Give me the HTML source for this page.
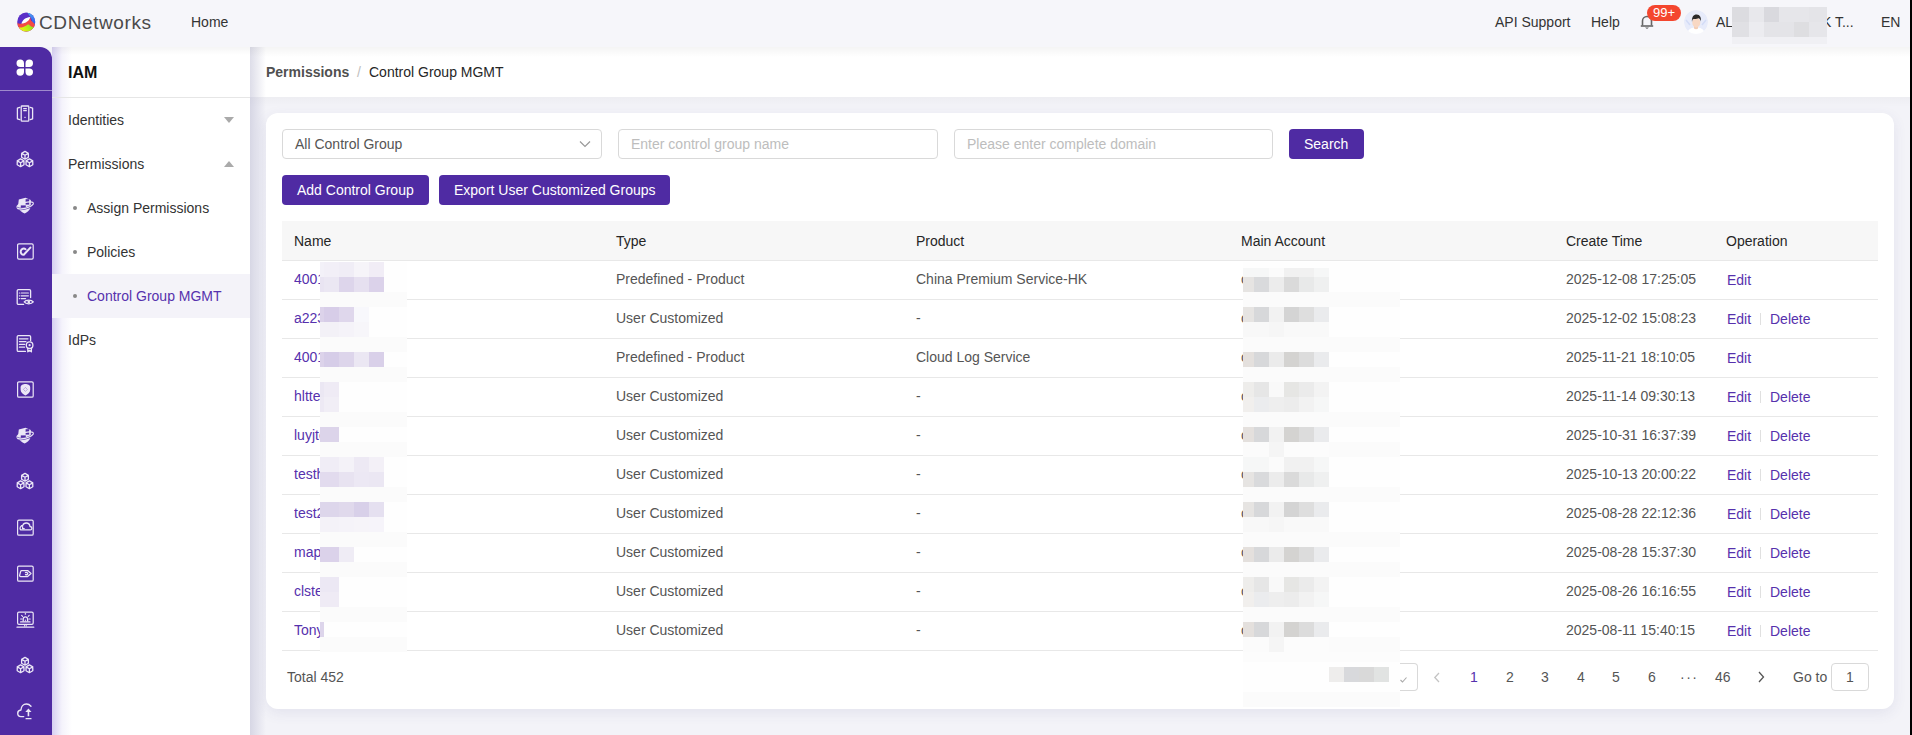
<!DOCTYPE html>
<html><head><meta charset="utf-8">
<style>
*{box-sizing:border-box;margin:0;padding:0}
html,body{width:1912px;height:735px;overflow:hidden;background:#f3f3f8;font-family:"Liberation Sans",sans-serif;color:#333;}
.t{position:absolute;white-space:nowrap;line-height:14px;font-size:14px;height:14px;}
.r{position:absolute;}
svg{position:absolute;overflow:visible}
</style></head><body>
<div class="r" style="left:0px;top:0px;width:1910px;height:47px;background:#f6f6fa;"></div>
<svg style="left:17px;top:11.5px" width="19" height="20" viewBox="0 0 19 20">
<defs>
<clipPath id="lc"><ellipse cx="9.2" cy="10" rx="9" ry="9.6"/></clipPath>
<linearGradient id="lgb" x1="0" y1="0" x2="0.3" y2="1"><stop offset="0" stop-color="#55b6ee"/><stop offset="1" stop-color="#2f5cf0"/></linearGradient>
<linearGradient id="lgg" x1="0" y1="0" x2="1" y2="-0.3"><stop offset="0" stop-color="#f2f20e"/><stop offset="1" stop-color="#5ee22a"/></linearGradient>
</defs>
<g clip-path="url(#lc)">
<rect x="0" y="0" width="19" height="20" fill="#5a2fc8"/>
<path d="M9.3 -1 L20 -1 L20 13 L15.3 12.4 C15.5 8.8 14.6 5.8 12.4 3.4 Z" fill="url(#lgb)"/>
<path d="M-1 9.6 C0.5 11.6 2.5 12 4.6 11.5 C8.5 11 12.3 8.6 13.1 5.2 L14 8.4 L18.5 12.8 L18 20 L-1 20 Z" fill="#f44a44"/>
<path d="M-1 14.8 C3 16.6 7 15.2 11.2 12.2 L14.6 14.8 L20 16 L20 21 L-1 21 Z" fill="url(#lgg)"/>
<path d="M4.4 11.6 C5.2 8 8.8 5.2 13.3 4.9 C12.6 8.6 8.6 11.2 4.4 11.6 Z" fill="#fff"/>
</g>
</svg>
<div class="t" style="left:39px;top:13px;font-size:19px;line-height:19px;height:19px;color:#4a4a4a;letter-spacing:0.6px;">CDNetworks</div>
<div class="t" style="left:191px;top:15px;">Home</div>
<div class="t" style="left:1495px;top:15px;">API Support</div>
<div class="t" style="left:1591px;top:15px;">Help</div>
<svg style="left:1640px;top:14px" width="14" height="16" viewBox="0 0 14 16">
<path d="M2.5 11.5 V7 A4.5 4.5 0 0 1 11.5 7 V11.5" fill="none" stroke="#666" stroke-width="1.6"/>
<path d="M0.8 12 H13.2" stroke="#666" stroke-width="1.6"/>
<path d="M5 13.5 H9 L7 15 Z" fill="#666"/>
</svg>
<div class="r" style="left:1647px;top:5px;width:34px;height:16px;border-radius:8px;background:#f4462e;color:#fff;font-size:13px;line-height:16px;text-align:center;">99+</div>
<svg style="left:1684px;top:10px" width="24" height="24" viewBox="0 0 24 24">
<defs><clipPath id="avc"><circle cx="12" cy="12" r="12"/></clipPath></defs>
<g clip-path="url(#avc)">
<circle cx="12" cy="12" r="12" fill="#e7ebfa"/>
<path d="M2 10 L6 15 M22 10 L18 15" stroke="#d3dcf6" stroke-width="1.5"/>
<path d="M3 24 C4 18.5 8 17.5 12 17.5 C16 17.5 20 18.5 21 24Z" fill="#fff"/>
<path d="M10 15 H14 V18.5 C13 19.5 11 19.5 10 18.5Z" fill="#f3cdb6"/>
<ellipse cx="12.3" cy="12.6" rx="4" ry="4.9" fill="#f8d8c4"/>
<path d="M8 12 C7.4 6.5 10 4.2 12.8 4.4 C15.8 4.6 17.5 7 16.8 11.5 C16.5 9.5 15.5 8.6 14.5 8.3 C12.5 9 10 9 8.8 9.2 C8.3 10 8.1 11 8 12Z" fill="#2a2a2a"/>
</g>
</svg>
<div class="t" style="left:1716px;top:15px;">AL</div>
<div class="t" style="left:1822px;top:15px;">K T...</div>
<div class="r" style="left:1732px;top:7px;width:17px;height:15px;background:#dcdce0;"></div>
<div class="r" style="left:1749px;top:7px;width:15px;height:15px;background:#e8e8ec;"></div>
<div class="r" style="left:1764px;top:7px;width:15px;height:15px;background:#d9d9de;"></div>
<div class="r" style="left:1779px;top:7px;width:15px;height:15px;background:#e6e6ea;"></div>
<div class="r" style="left:1794px;top:7px;width:15px;height:15px;background:#e6e6ea;"></div>
<div class="r" style="left:1809px;top:7px;width:18px;height:15px;background:#e4e4e8;"></div>
<div class="r" style="left:1732px;top:22px;width:17px;height:15px;background:#e0e0e4;"></div>
<div class="r" style="left:1749px;top:22px;width:15px;height:15px;background:#ececf0;"></div>
<div class="r" style="left:1764px;top:22px;width:15px;height:15px;background:#e4e4e8;"></div>
<div class="r" style="left:1779px;top:22px;width:15px;height:15px;background:#e4e4e8;"></div>
<div class="r" style="left:1794px;top:22px;width:15px;height:15px;background:#dedee1;"></div>
<div class="r" style="left:1809px;top:22px;width:18px;height:15px;background:#e6e6ea;"></div>
<div class="r" style="left:1732px;top:37px;width:95px;height:7px;background:#f0f0f4;"></div>
<div class="t" style="left:1881px;top:15px;">EN</div>
<div class="r" style="left:250px;top:47px;width:1660px;height:688px;background:#f3f3f8;"></div>
<div class="r" style="left:250px;top:97px;width:1660px;height:10px;background:linear-gradient(180deg,rgba(0,0,0,.025),rgba(0,0,0,0));"></div>
<div class="r" style="left:250px;top:47px;width:1660px;height:50px;background:#fff;"></div>
<div class="r" style="left:250px;top:47px;width:16px;height:688px;background:linear-gradient(90deg,rgba(180,180,205,.45),rgba(180,180,205,0));"></div>
<div class="r" style="left:52px;top:47px;width:1858px;height:10px;background:linear-gradient(180deg,rgba(0,0,0,.045),rgba(0,0,0,0));"></div>
<div class="t" style="left:266px;top:65px;color:#505050;font-weight:bold;">Permissions</div>
<div class="t" style="left:357px;top:65px;color:#c0c0c0;">/</div>
<div class="t" style="left:369px;top:65px;color:#262626;">Control Group MGMT</div>
<div class="r" style="left:266px;top:113px;width:1628px;height:596px;background:#fff;border-radius:12px;box-shadow:0 4px 14px rgba(70,70,130,.09);"></div>
<div class="r" style="left:282px;top:129px;width:320px;height:30px;border:1px solid #d9d9d9;border-radius:4px;background:#fff;"></div>
<div class="t" style="left:295px;top:137px;color:#555;">All Control Group</div>
<svg style="left:579px;top:140px" width="12" height="8" viewBox="0 0 12 8"><path d="M1 1.5 L6 6.5 L11 1.5" fill="none" stroke="#999" stroke-width="1.2"/></svg>
<div class="r" style="left:618px;top:129px;width:320px;height:30px;border:1px solid #d9d9d9;border-radius:4px;background:#fff;"></div>
<div class="t" style="left:631px;top:137px;color:#bdbdbd;">Enter control group name</div>
<div class="r" style="left:954px;top:129px;width:319px;height:30px;border:1px solid #d9d9d9;border-radius:4px;background:#fff;"></div>
<div class="t" style="left:967px;top:137px;color:#bdbdbd;">Please enter complete domain</div>
<div class="r" style="left:1289px;top:129px;width:75px;height:30px;background:#4f2ba3;border-radius:4px;"></div>
<div class="t" style="left:1304px;top:137px;color:#fff;">Search</div>
<div class="r" style="left:282px;top:175px;width:147px;height:30px;background:#4f2ba3;border-radius:4px;"></div>
<div class="t" style="left:297px;top:183px;color:#fff;">Add Control Group</div>
<div class="r" style="left:439px;top:175px;width:231px;height:30px;background:#4f2ba3;border-radius:4px;"></div>
<div class="t" style="left:454px;top:183px;color:#fff;">Export User Customized Groups</div>
<div class="r" style="left:282px;top:221px;width:1596px;height:39px;background:#f7f7f7;"></div>
<div class="t" style="left:294px;top:234px;color:#262626;">Name</div>
<div class="t" style="left:616px;top:234px;color:#262626;">Type</div>
<div class="t" style="left:916px;top:234px;color:#262626;">Product</div>
<div class="t" style="left:1241px;top:234px;color:#262626;">Main Account</div>
<div class="t" style="left:1566px;top:234px;color:#262626;">Create Time</div>
<div class="t" style="left:1726px;top:234px;color:#262626;">Operation</div>
<div class="r" style="left:282px;top:260px;width:1596px;height:1px;background:#e8e8e8;"></div>
<div class="r" style="left:294px;top:272px;width:26px;height:16px;overflow:hidden;"><div class="t" style="left:0;top:0;color:#5631ad">4001</div></div>
<div class="t" style="left:616px;top:272px;color:#555;">Predefined - Product</div>
<div class="t" style="left:916px;top:272px;color:#555;">China Premium Service-HK</div>
<div class="t" style="left:1566px;top:272px;color:#555;">2025-12-08 17:25:05</div>
<div class="t" style="left:1727px;top:273px;color:#5631ad;">Edit</div>
<div class="r" style="left:282px;top:299px;width:1596px;height:1px;background:#e8e8e8;"></div>
<div class="r" style="left:294px;top:311px;width:26px;height:16px;overflow:hidden;"><div class="t" style="left:0;top:0;color:#5631ad">a223</div></div>
<div class="t" style="left:616px;top:311px;color:#555;">User Customized</div>
<div class="t" style="left:916px;top:311px;color:#555;">-</div>
<div class="t" style="left:1566px;top:311px;color:#555;">2025-12-02 15:08:23</div>
<div class="t" style="left:1727px;top:312px;color:#5631ad;">Edit</div>
<div class="r" style="left:1760px;top:313px;width:1px;height:12px;background:#e0e0e0;"></div>
<div class="t" style="left:1770px;top:312px;color:#5631ad;">Delete</div>
<div class="r" style="left:282px;top:338px;width:1596px;height:1px;background:#e8e8e8;"></div>
<div class="r" style="left:294px;top:350px;width:26px;height:16px;overflow:hidden;"><div class="t" style="left:0;top:0;color:#5631ad">4001</div></div>
<div class="t" style="left:616px;top:350px;color:#555;">Predefined - Product</div>
<div class="t" style="left:916px;top:350px;color:#555;">Cloud Log Service</div>
<div class="t" style="left:1566px;top:350px;color:#555;">2025-11-21 18:10:05</div>
<div class="t" style="left:1727px;top:351px;color:#5631ad;">Edit</div>
<div class="r" style="left:282px;top:377px;width:1596px;height:1px;background:#e8e8e8;"></div>
<div class="r" style="left:294px;top:389px;width:26px;height:16px;overflow:hidden;"><div class="t" style="left:0;top:0;color:#5631ad">hltte</div></div>
<div class="t" style="left:616px;top:389px;color:#555;">User Customized</div>
<div class="t" style="left:916px;top:389px;color:#555;">-</div>
<div class="t" style="left:1566px;top:389px;color:#555;">2025-11-14 09:30:13</div>
<div class="t" style="left:1727px;top:390px;color:#5631ad;">Edit</div>
<div class="r" style="left:1760px;top:391px;width:1px;height:12px;background:#e0e0e0;"></div>
<div class="t" style="left:1770px;top:390px;color:#5631ad;">Delete</div>
<div class="r" style="left:282px;top:416px;width:1596px;height:1px;background:#e8e8e8;"></div>
<div class="r" style="left:294px;top:428px;width:26px;height:16px;overflow:hidden;"><div class="t" style="left:0;top:0;color:#5631ad">luyjtc</div></div>
<div class="t" style="left:616px;top:428px;color:#555;">User Customized</div>
<div class="t" style="left:916px;top:428px;color:#555;">-</div>
<div class="t" style="left:1566px;top:428px;color:#555;">2025-10-31 16:37:39</div>
<div class="t" style="left:1727px;top:429px;color:#5631ad;">Edit</div>
<div class="r" style="left:1760px;top:430px;width:1px;height:12px;background:#e0e0e0;"></div>
<div class="t" style="left:1770px;top:429px;color:#5631ad;">Delete</div>
<div class="r" style="left:282px;top:455px;width:1596px;height:1px;background:#e8e8e8;"></div>
<div class="r" style="left:294px;top:467px;width:26px;height:16px;overflow:hidden;"><div class="t" style="left:0;top:0;color:#5631ad">testh</div></div>
<div class="t" style="left:616px;top:467px;color:#555;">User Customized</div>
<div class="t" style="left:916px;top:467px;color:#555;">-</div>
<div class="t" style="left:1566px;top:467px;color:#555;">2025-10-13 20:00:22</div>
<div class="t" style="left:1727px;top:468px;color:#5631ad;">Edit</div>
<div class="r" style="left:1760px;top:469px;width:1px;height:12px;background:#e0e0e0;"></div>
<div class="t" style="left:1770px;top:468px;color:#5631ad;">Delete</div>
<div class="r" style="left:282px;top:494px;width:1596px;height:1px;background:#e8e8e8;"></div>
<div class="r" style="left:294px;top:506px;width:26px;height:16px;overflow:hidden;"><div class="t" style="left:0;top:0;color:#5631ad">test2</div></div>
<div class="t" style="left:616px;top:506px;color:#555;">User Customized</div>
<div class="t" style="left:916px;top:506px;color:#555;">-</div>
<div class="t" style="left:1566px;top:506px;color:#555;">2025-08-28 22:12:36</div>
<div class="t" style="left:1727px;top:507px;color:#5631ad;">Edit</div>
<div class="r" style="left:1760px;top:508px;width:1px;height:12px;background:#e0e0e0;"></div>
<div class="t" style="left:1770px;top:507px;color:#5631ad;">Delete</div>
<div class="r" style="left:282px;top:533px;width:1596px;height:1px;background:#e8e8e8;"></div>
<div class="r" style="left:294px;top:545px;width:26px;height:16px;overflow:hidden;"><div class="t" style="left:0;top:0;color:#5631ad">map</div></div>
<div class="t" style="left:616px;top:545px;color:#555;">User Customized</div>
<div class="t" style="left:916px;top:545px;color:#555;">-</div>
<div class="t" style="left:1566px;top:545px;color:#555;">2025-08-28 15:37:30</div>
<div class="t" style="left:1727px;top:546px;color:#5631ad;">Edit</div>
<div class="r" style="left:1760px;top:547px;width:1px;height:12px;background:#e0e0e0;"></div>
<div class="t" style="left:1770px;top:546px;color:#5631ad;">Delete</div>
<div class="r" style="left:282px;top:572px;width:1596px;height:1px;background:#e8e8e8;"></div>
<div class="r" style="left:294px;top:584px;width:26px;height:16px;overflow:hidden;"><div class="t" style="left:0;top:0;color:#5631ad">clste</div></div>
<div class="t" style="left:616px;top:584px;color:#555;">User Customized</div>
<div class="t" style="left:916px;top:584px;color:#555;">-</div>
<div class="t" style="left:1566px;top:584px;color:#555;">2025-08-26 16:16:55</div>
<div class="t" style="left:1727px;top:585px;color:#5631ad;">Edit</div>
<div class="r" style="left:1760px;top:586px;width:1px;height:12px;background:#e0e0e0;"></div>
<div class="t" style="left:1770px;top:585px;color:#5631ad;">Delete</div>
<div class="r" style="left:282px;top:611px;width:1596px;height:1px;background:#e8e8e8;"></div>
<div class="r" style="left:294px;top:623px;width:26px;height:16px;overflow:hidden;"><div class="t" style="left:0;top:0;color:#5631ad">Tony</div></div>
<div class="t" style="left:616px;top:623px;color:#555;">User Customized</div>
<div class="t" style="left:916px;top:623px;color:#555;">-</div>
<div class="t" style="left:1566px;top:623px;color:#555;">2025-08-11 15:40:15</div>
<div class="t" style="left:1727px;top:624px;color:#5631ad;">Edit</div>
<div class="r" style="left:1760px;top:625px;width:1px;height:12px;background:#e0e0e0;"></div>
<div class="t" style="left:1770px;top:624px;color:#5631ad;">Delete</div>
<div class="r" style="left:282px;top:650px;width:1596px;height:1px;background:#e8e8e8;"></div>
<div class="r" style="left:320px;top:262px;width:87px;height:390px;background:#fefefe;"></div>
<div class="r" style="left:1243px;top:262px;width:157px;height:445px;background:#fefefe;"></div>
<div class="r" style="left:320px;top:292px;width:87px;height:15px;background:#fbfbfb;"></div>
<div class="r" style="left:1243px;top:292px;width:157px;height:15px;background:#fbfbfb;"></div>
<div class="r" style="left:320px;top:337px;width:87px;height:15px;background:#fbfbfb;"></div>
<div class="r" style="left:1243px;top:337px;width:157px;height:15px;background:#fbfbfb;"></div>
<div class="r" style="left:320px;top:367px;width:87px;height:15px;background:#fbfbfb;"></div>
<div class="r" style="left:1243px;top:367px;width:157px;height:15px;background:#fbfbfb;"></div>
<div class="r" style="left:320px;top:412px;width:87px;height:15px;background:#fbfbfb;"></div>
<div class="r" style="left:1243px;top:412px;width:157px;height:15px;background:#fbfbfb;"></div>
<div class="r" style="left:320px;top:442px;width:87px;height:15px;background:#fbfbfb;"></div>
<div class="r" style="left:1243px;top:442px;width:157px;height:15px;background:#fbfbfb;"></div>
<div class="r" style="left:320px;top:487px;width:87px;height:15px;background:#fbfbfb;"></div>
<div class="r" style="left:1243px;top:487px;width:157px;height:15px;background:#fbfbfb;"></div>
<div class="r" style="left:320px;top:532px;width:87px;height:15px;background:#fbfbfb;"></div>
<div class="r" style="left:1243px;top:532px;width:157px;height:15px;background:#fbfbfb;"></div>
<div class="r" style="left:320px;top:562px;width:87px;height:15px;background:#fbfbfb;"></div>
<div class="r" style="left:1243px;top:562px;width:157px;height:15px;background:#fbfbfb;"></div>
<div class="r" style="left:320px;top:607px;width:87px;height:15px;background:#fbfbfb;"></div>
<div class="r" style="left:1243px;top:607px;width:157px;height:15px;background:#fbfbfb;"></div>
<div class="r" style="left:320px;top:637px;width:87px;height:15px;background:#fbfbfb;"></div>
<div class="r" style="left:1243px;top:637px;width:157px;height:15px;background:#fbfbfb;"></div>
<div class="r" style="left:1243px;top:652px;width:157px;height:10px;background:#fcfcfc;"></div>
<div class="r" style="left:1243px;top:692px;width:157px;height:15px;background:#fbfbfb;"></div>
<div class="r" style="left:320px;top:262px;width:4px;height:15px;background:#f3f1f8;"></div>
<div class="r" style="left:324px;top:262px;width:15px;height:15px;background:#f2eff7;"></div>
<div class="r" style="left:339px;top:262px;width:15px;height:15px;background:#f0edf6;"></div>
<div class="r" style="left:354px;top:262px;width:15px;height:15px;background:#f6f4f9;"></div>
<div class="r" style="left:369px;top:262px;width:15px;height:15px;background:#f1edf6;"></div>
<div class="r" style="left:320px;top:277px;width:4px;height:15px;background:#e9e4f2;"></div>
<div class="r" style="left:324px;top:277px;width:15px;height:15px;background:#ebe7f3;"></div>
<div class="r" style="left:339px;top:277px;width:15px;height:15px;background:#ddd5eb;"></div>
<div class="r" style="left:354px;top:277px;width:15px;height:15px;background:#e6e0f0;"></div>
<div class="r" style="left:369px;top:277px;width:15px;height:15px;background:#dbd2ea;"></div>
<div class="r" style="left:320px;top:307px;width:4px;height:15px;background:#dcd3ea;"></div>
<div class="r" style="left:324px;top:307px;width:15px;height:15px;background:#d7cde8;"></div>
<div class="r" style="left:339px;top:307px;width:15px;height:15px;background:#dfd7ec;"></div>
<div class="r" style="left:354px;top:307px;width:15px;height:15px;background:#f8f8fc;"></div>
<div class="r" style="left:320px;top:322px;width:4px;height:15px;background:#f3f1f7;"></div>
<div class="r" style="left:324px;top:322px;width:15px;height:15px;background:#f3f1f7;"></div>
<div class="r" style="left:339px;top:322px;width:15px;height:15px;background:#f5f3f9;"></div>
<div class="r" style="left:354px;top:322px;width:15px;height:15px;background:#f7f6fa;"></div>
<div class="r" style="left:320px;top:352px;width:4px;height:15px;background:#dcd3ea;"></div>
<div class="r" style="left:324px;top:352px;width:15px;height:15px;background:#d6cde8;"></div>
<div class="r" style="left:339px;top:352px;width:15px;height:15px;background:#ddd5eb;"></div>
<div class="r" style="left:354px;top:352px;width:15px;height:15px;background:#ebe7f3;"></div>
<div class="r" style="left:369px;top:352px;width:15px;height:15px;background:#d9d0e9;"></div>
<div class="r" style="left:320px;top:382px;width:4px;height:15px;background:#ebe7f3;"></div>
<div class="r" style="left:324px;top:382px;width:15px;height:15px;background:#efebf5;"></div>
<div class="r" style="left:320px;top:397px;width:4px;height:15px;background:#ede9f4;"></div>
<div class="r" style="left:324px;top:397px;width:15px;height:15px;background:#f1eef6;"></div>
<div class="r" style="left:320px;top:427px;width:4px;height:15px;background:#dcd4ea;"></div>
<div class="r" style="left:324px;top:427px;width:15px;height:15px;background:#dcd4ea;"></div>
<div class="r" style="left:320px;top:457px;width:4px;height:15px;background:#f0edf6;"></div>
<div class="r" style="left:324px;top:457px;width:15px;height:15px;background:#f0edf6;"></div>
<div class="r" style="left:339px;top:457px;width:15px;height:15px;background:#f4f2f8;"></div>
<div class="r" style="left:354px;top:457px;width:15px;height:15px;background:#ede9f4;"></div>
<div class="r" style="left:369px;top:457px;width:15px;height:15px;background:#f3f0f7;"></div>
<div class="r" style="left:320px;top:472px;width:4px;height:15px;background:#e2dbee;"></div>
<div class="r" style="left:324px;top:472px;width:15px;height:15px;background:#e2dbee;"></div>
<div class="r" style="left:339px;top:472px;width:15px;height:15px;background:#e8e3f1;"></div>
<div class="r" style="left:354px;top:472px;width:15px;height:15px;background:#ece8f4;"></div>
<div class="r" style="left:369px;top:472px;width:15px;height:15px;background:#ebe7f3;"></div>
<div class="r" style="left:320px;top:502px;width:4px;height:15px;background:#ddd6eb;"></div>
<div class="r" style="left:324px;top:502px;width:15px;height:15px;background:#ddd6eb;"></div>
<div class="r" style="left:339px;top:502px;width:15px;height:15px;background:#e0d9ec;"></div>
<div class="r" style="left:354px;top:502px;width:15px;height:15px;background:#d8d0e9;"></div>
<div class="r" style="left:369px;top:502px;width:15px;height:15px;background:#e5e0f0;"></div>
<div class="r" style="left:320px;top:517px;width:4px;height:15px;background:#f4f2f8;"></div>
<div class="r" style="left:324px;top:517px;width:15px;height:15px;background:#f4f2f8;"></div>
<div class="r" style="left:339px;top:517px;width:15px;height:15px;background:#f5f3f9;"></div>
<div class="r" style="left:354px;top:517px;width:15px;height:15px;background:#f6f4f9;"></div>
<div class="r" style="left:369px;top:517px;width:15px;height:15px;background:#f6f4fa;"></div>
<div class="r" style="left:320px;top:547px;width:4px;height:15px;background:#dbd2ea;"></div>
<div class="r" style="left:324px;top:547px;width:15px;height:15px;background:#dbd2ea;"></div>
<div class="r" style="left:339px;top:547px;width:15px;height:15px;background:#efecf5;"></div>
<div class="r" style="left:320px;top:577px;width:4px;height:15px;background:#ece8f4;"></div>
<div class="r" style="left:324px;top:577px;width:15px;height:15px;background:#ece8f4;"></div>
<div class="r" style="left:320px;top:592px;width:4px;height:15px;background:#efebf5;"></div>
<div class="r" style="left:324px;top:592px;width:15px;height:15px;background:#efebf5;"></div>
<div class="r" style="left:320px;top:622px;width:4px;height:15px;background:#ddd5eb;"></div>
<div class="r" style="left:1243px;top:268px;width:11px;height:9px;background:#f6f7f7;"></div>
<div class="r" style="left:1254px;top:268px;width:15px;height:9px;background:#f6f7f7;"></div>
<div class="r" style="left:1269px;top:268px;width:15px;height:9px;background:#fbfbfb;"></div>
<div class="r" style="left:1284px;top:268px;width:15px;height:9px;background:#f1f1f1;"></div>
<div class="r" style="left:1299px;top:268px;width:15px;height:9px;background:#f1f1f1;"></div>
<div class="r" style="left:1314px;top:268px;width:15px;height:9px;background:#f6f7f7;"></div>
<div class="r" style="left:1243px;top:277px;width:11px;height:15px;background:#e6e4e2;"></div>
<div class="r" style="left:1254px;top:277px;width:15px;height:15px;background:#d9dadc;"></div>
<div class="r" style="left:1269px;top:277px;width:15px;height:15px;background:#ececec;"></div>
<div class="r" style="left:1284px;top:277px;width:15px;height:15px;background:#dadada;"></div>
<div class="r" style="left:1299px;top:277px;width:15px;height:15px;background:#e8e9e9;"></div>
<div class="r" style="left:1314px;top:277px;width:15px;height:15px;background:#eff0f0;"></div>
<div class="r" style="left:1243px;top:307px;width:11px;height:15px;background:#e6e4e2;"></div>
<div class="r" style="left:1254px;top:307px;width:15px;height:15px;background:#d7d8da;"></div>
<div class="r" style="left:1269px;top:307px;width:15px;height:15px;background:#f2f2f2;"></div>
<div class="r" style="left:1284px;top:307px;width:15px;height:15px;background:#d4d4d4;"></div>
<div class="r" style="left:1299px;top:307px;width:15px;height:15px;background:#dedede;"></div>
<div class="r" style="left:1314px;top:307px;width:15px;height:15px;background:#eaebed;"></div>
<div class="r" style="left:1243px;top:322px;width:11px;height:15px;background:#f8f8f8;"></div>
<div class="r" style="left:1254px;top:322px;width:15px;height:15px;background:#f8f8f8;"></div>
<div class="r" style="left:1269px;top:322px;width:15px;height:15px;background:#f6f6f6;"></div>
<div class="r" style="left:1284px;top:322px;width:15px;height:15px;background:#f9f9f9;"></div>
<div class="r" style="left:1299px;top:322px;width:15px;height:15px;background:#f9f9f9;"></div>
<div class="r" style="left:1314px;top:322px;width:15px;height:15px;background:#f9f9f9;"></div>
<div class="r" style="left:1243px;top:352px;width:11px;height:15px;background:#e4e0dd;"></div>
<div class="r" style="left:1254px;top:352px;width:15px;height:15px;background:#d7d8da;"></div>
<div class="r" style="left:1269px;top:352px;width:15px;height:15px;background:#ebebeb;"></div>
<div class="r" style="left:1284px;top:352px;width:15px;height:15px;background:#d4d3d1;"></div>
<div class="r" style="left:1299px;top:352px;width:15px;height:15px;background:#dcdcdc;"></div>
<div class="r" style="left:1314px;top:352px;width:15px;height:15px;background:#eaebed;"></div>
<div class="r" style="left:1243px;top:382px;width:11px;height:15px;background:#eeedeb;"></div>
<div class="r" style="left:1254px;top:382px;width:15px;height:15px;background:#e6e6e6;"></div>
<div class="r" style="left:1269px;top:382px;width:15px;height:15px;background:#f9f9f9;"></div>
<div class="r" style="left:1284px;top:382px;width:15px;height:15px;background:#e6e6e4;"></div>
<div class="r" style="left:1299px;top:382px;width:15px;height:15px;background:#ebebeb;"></div>
<div class="r" style="left:1314px;top:382px;width:15px;height:15px;background:#f3f3f3;"></div>
<div class="r" style="left:1243px;top:397px;width:11px;height:15px;background:#f1efed;"></div>
<div class="r" style="left:1254px;top:397px;width:15px;height:15px;background:#ebecee;"></div>
<div class="r" style="left:1269px;top:397px;width:15px;height:15px;background:#eeeeee;"></div>
<div class="r" style="left:1284px;top:397px;width:15px;height:15px;background:#ececec;"></div>
<div class="r" style="left:1299px;top:397px;width:15px;height:15px;background:#f2f2f2;"></div>
<div class="r" style="left:1314px;top:397px;width:15px;height:15px;background:#f6f7f7;"></div>
<div class="r" style="left:1243px;top:427px;width:11px;height:15px;background:#e4e0dd;"></div>
<div class="r" style="left:1254px;top:427px;width:15px;height:15px;background:#d7d8da;"></div>
<div class="r" style="left:1269px;top:427px;width:15px;height:15px;background:#f2f2f2;"></div>
<div class="r" style="left:1284px;top:427px;width:15px;height:15px;background:#d4d3d1;"></div>
<div class="r" style="left:1299px;top:427px;width:15px;height:15px;background:#dcdcdc;"></div>
<div class="r" style="left:1314px;top:427px;width:15px;height:15px;background:#eaebed;"></div>
<div class="r" style="left:1243px;top:442px;width:11px;height:15px;background:#fbfbfb;"></div>
<div class="r" style="left:1254px;top:442px;width:15px;height:15px;background:#fbfbfb;"></div>
<div class="r" style="left:1269px;top:442px;width:15px;height:15px;background:#f5f5f5;"></div>
<div class="r" style="left:1284px;top:442px;width:15px;height:15px;background:#fcfcfc;"></div>
<div class="r" style="left:1299px;top:442px;width:15px;height:15px;background:#fcfcfc;"></div>
<div class="r" style="left:1314px;top:442px;width:15px;height:15px;background:#fcfcfc;"></div>
<div class="r" style="left:1243px;top:457px;width:11px;height:15px;background:#f6f7f7;"></div>
<div class="r" style="left:1254px;top:457px;width:15px;height:15px;background:#f6f7f7;"></div>
<div class="r" style="left:1269px;top:457px;width:15px;height:15px;background:#fbfbfb;"></div>
<div class="r" style="left:1284px;top:457px;width:15px;height:15px;background:#f1f1f1;"></div>
<div class="r" style="left:1299px;top:457px;width:15px;height:15px;background:#f1f1f1;"></div>
<div class="r" style="left:1314px;top:457px;width:15px;height:15px;background:#f6f7f7;"></div>
<div class="r" style="left:1243px;top:472px;width:11px;height:15px;background:#e6e4e2;"></div>
<div class="r" style="left:1254px;top:472px;width:15px;height:15px;background:#d9dadc;"></div>
<div class="r" style="left:1269px;top:472px;width:15px;height:15px;background:#ececec;"></div>
<div class="r" style="left:1284px;top:472px;width:15px;height:15px;background:#dadada;"></div>
<div class="r" style="left:1299px;top:472px;width:15px;height:15px;background:#e8e9e9;"></div>
<div class="r" style="left:1314px;top:472px;width:15px;height:15px;background:#eff0f0;"></div>
<div class="r" style="left:1243px;top:502px;width:11px;height:15px;background:#e6e4e2;"></div>
<div class="r" style="left:1254px;top:502px;width:15px;height:15px;background:#d7d8da;"></div>
<div class="r" style="left:1269px;top:502px;width:15px;height:15px;background:#f2f2f2;"></div>
<div class="r" style="left:1284px;top:502px;width:15px;height:15px;background:#d4d4d4;"></div>
<div class="r" style="left:1299px;top:502px;width:15px;height:15px;background:#dedede;"></div>
<div class="r" style="left:1314px;top:502px;width:15px;height:15px;background:#eaebed;"></div>
<div class="r" style="left:1243px;top:517px;width:11px;height:15px;background:#f8f8f8;"></div>
<div class="r" style="left:1254px;top:517px;width:15px;height:15px;background:#f8f8f8;"></div>
<div class="r" style="left:1269px;top:517px;width:15px;height:15px;background:#f6f6f6;"></div>
<div class="r" style="left:1284px;top:517px;width:15px;height:15px;background:#f9f9f9;"></div>
<div class="r" style="left:1299px;top:517px;width:15px;height:15px;background:#f9f9f9;"></div>
<div class="r" style="left:1314px;top:517px;width:15px;height:15px;background:#f9f9f9;"></div>
<div class="r" style="left:1243px;top:547px;width:11px;height:15px;background:#e4e0dd;"></div>
<div class="r" style="left:1254px;top:547px;width:15px;height:15px;background:#d7d8da;"></div>
<div class="r" style="left:1269px;top:547px;width:15px;height:15px;background:#ebebeb;"></div>
<div class="r" style="left:1284px;top:547px;width:15px;height:15px;background:#d4d3d1;"></div>
<div class="r" style="left:1299px;top:547px;width:15px;height:15px;background:#dcdcdc;"></div>
<div class="r" style="left:1314px;top:547px;width:15px;height:15px;background:#eaebed;"></div>
<div class="r" style="left:1243px;top:577px;width:11px;height:15px;background:#eeedeb;"></div>
<div class="r" style="left:1254px;top:577px;width:15px;height:15px;background:#e6e6e6;"></div>
<div class="r" style="left:1269px;top:577px;width:15px;height:15px;background:#f9f9f9;"></div>
<div class="r" style="left:1284px;top:577px;width:15px;height:15px;background:#e6e6e4;"></div>
<div class="r" style="left:1299px;top:577px;width:15px;height:15px;background:#ebebeb;"></div>
<div class="r" style="left:1314px;top:577px;width:15px;height:15px;background:#f3f3f3;"></div>
<div class="r" style="left:1243px;top:592px;width:11px;height:15px;background:#f1efed;"></div>
<div class="r" style="left:1254px;top:592px;width:15px;height:15px;background:#ebecee;"></div>
<div class="r" style="left:1269px;top:592px;width:15px;height:15px;background:#eeeeee;"></div>
<div class="r" style="left:1284px;top:592px;width:15px;height:15px;background:#ececec;"></div>
<div class="r" style="left:1299px;top:592px;width:15px;height:15px;background:#f2f2f2;"></div>
<div class="r" style="left:1314px;top:592px;width:15px;height:15px;background:#f6f7f7;"></div>
<div class="r" style="left:1243px;top:622px;width:11px;height:15px;background:#e4e0dd;"></div>
<div class="r" style="left:1254px;top:622px;width:15px;height:15px;background:#d7d8da;"></div>
<div class="r" style="left:1269px;top:622px;width:15px;height:15px;background:#f2f2f2;"></div>
<div class="r" style="left:1284px;top:622px;width:15px;height:15px;background:#d4d3d1;"></div>
<div class="r" style="left:1299px;top:622px;width:15px;height:15px;background:#dcdcdc;"></div>
<div class="r" style="left:1314px;top:622px;width:15px;height:15px;background:#eaebed;"></div>
<div class="r" style="left:1243px;top:637px;width:11px;height:15px;background:#fbfbfb;"></div>
<div class="r" style="left:1254px;top:637px;width:15px;height:15px;background:#fbfbfb;"></div>
<div class="r" style="left:1269px;top:637px;width:15px;height:15px;background:#f5f5f5;"></div>
<div class="r" style="left:1284px;top:637px;width:15px;height:15px;background:#fcfcfc;"></div>
<div class="r" style="left:1299px;top:637px;width:15px;height:15px;background:#fcfcfc;"></div>
<div class="r" style="left:1314px;top:637px;width:15px;height:15px;background:#fcfcfc;"></div>
<div class="r" style="left:1241px;top:272px;width:2px;height:16px;overflow:hidden;"><div class="t" style="left:0;top:0;color:#555">c</div></div>
<div class="r" style="left:1241px;top:311px;width:2px;height:16px;overflow:hidden;"><div class="t" style="left:0;top:0;color:#555">c</div></div>
<div class="r" style="left:1241px;top:350px;width:2px;height:16px;overflow:hidden;"><div class="t" style="left:0;top:0;color:#555">c</div></div>
<div class="r" style="left:1241px;top:389px;width:2px;height:16px;overflow:hidden;"><div class="t" style="left:0;top:0;color:#555">c</div></div>
<div class="r" style="left:1241px;top:428px;width:2px;height:16px;overflow:hidden;"><div class="t" style="left:0;top:0;color:#555">c</div></div>
<div class="r" style="left:1241px;top:467px;width:2px;height:16px;overflow:hidden;"><div class="t" style="left:0;top:0;color:#555">c</div></div>
<div class="r" style="left:1241px;top:506px;width:2px;height:16px;overflow:hidden;"><div class="t" style="left:0;top:0;color:#555">c</div></div>
<div class="r" style="left:1241px;top:545px;width:2px;height:16px;overflow:hidden;"><div class="t" style="left:0;top:0;color:#555">c</div></div>
<div class="r" style="left:1241px;top:584px;width:2px;height:16px;overflow:hidden;"><div class="t" style="left:0;top:0;color:#555">c</div></div>
<div class="r" style="left:1241px;top:623px;width:2px;height:16px;overflow:hidden;"><div class="t" style="left:0;top:0;color:#555">c</div></div>
<div class="t" style="left:287px;top:670px;color:#555;">Total 452</div>
<div class="r" style="left:1329px;top:667px;width:15px;height:15px;background:#eeedec;"></div>
<div class="r" style="left:1344px;top:667px;width:15px;height:15px;background:#d8d9dc;"></div>
<div class="r" style="left:1359px;top:667px;width:15px;height:15px;background:#d9d9d9;"></div>
<div class="r" style="left:1374px;top:667px;width:15px;height:15px;background:#e1e3e2;"></div>
<div class="r" style="left:1400px;top:663px;width:18px;height:28px;border:1px solid #d9d9d9;border-left:none;border-radius:0 4px 4px 0;"></div>
<svg style="left:1433px;top:672px" width="8" height="11" viewBox="0 0 8 11"><path d="M6 1 L1.8 5.5 L6 10" fill="none" stroke="#c4c4c4" stroke-width="1.3"/></svg><svg style="left:1400px;top:676px" width="7" height="7" viewBox="0 0 7 7"><path d="M0.5 4 L2.5 6 L6.5 1.5" fill="none" stroke="#aaa" stroke-width="1.1"/></svg>
<div class="t" style="left:1470px;top:670px;color:#5631ad;">1</div>
<div class="t" style="left:1506px;top:670px;color:#555;">2</div>
<div class="t" style="left:1541px;top:670px;color:#555;">3</div>
<div class="t" style="left:1577px;top:670px;color:#555;">4</div>
<div class="t" style="left:1612px;top:670px;color:#555;">5</div>
<div class="t" style="left:1648px;top:670px;color:#555;">6</div>
<div class="t" style="left:1680px;top:670px;color:#555;"><span style="letter-spacing:1.5px">···</span></div>
<div class="t" style="left:1715px;top:670px;color:#555;">46</div>
<svg style="left:1757px;top:671px" width="8" height="12" viewBox="0 0 8 12"><path d="M2 1 L6.5 6 L2 11" fill="none" stroke="#555" stroke-width="1.3"/></svg>
<div class="t" style="left:1793px;top:670px;color:#555;">Go to</div>
<div class="r" style="left:1831px;top:663px;width:38px;height:28px;border:1px solid #d9d9d9;border-radius:4px;background:#fff;"></div>
<div class="t" style="left:1846px;top:670px;color:#555;">1</div>
<div class="r" style="left:0px;top:47px;width:52px;height:688px;background:#4f2ba3;border-top-right-radius:12px;"></div>
<div class="r" style="left:0px;top:90px;width:52px;height:1px;background:rgba(255,255,255,.45);"></div>
<svg style="left:15.8px;top:59.3px" width="18" height="18" viewBox="0 0 18 18"><g fill="#fff"><path d="M8 8 H4.2 A3.7 3.7 0 0 1 0.5 4.3 A3.7 3.7 0 0 1 4.2 0.6 A3.8 3.8 0 0 1 8 4.3 Z"/><path d="M9.5 8 H13.3 A3.7 3.7 0 0 0 17 4.3 A3.7 3.7 0 0 0 13.3 0.6 A3.8 3.8 0 0 0 9.5 4.3 Z"/><path d="M8 9.4 H4.2 A3.7 3.7 0 0 0 0.5 13.1 A3.7 3.7 0 0 0 4.2 16.8 A3.8 3.8 0 0 0 8 13.1 Z"/><path d="M9.5 9.4 H13.3 A3.7 3.7 0 0 1 17 13.1 A3.7 3.7 0 0 1 13.3 16.8 A3.8 3.8 0 0 1 9.5 13.1 Z"/></g></svg>
<svg style="left:15.8px;top:104.5px" width="18" height="18" viewBox="0 0 18 18"><rect x="5.2" y="1" width="7.6" height="15.2" rx="0.8" fill="none" stroke="#ebe7f6" stroke-width="1.3" stroke-linejoin="round" stroke-linecap="round"/><path d="M7.2 3.6 H10.8 M7.2 5.6 H10.8" stroke="#ebe7f6" stroke-width="1.4"/><rect x="8.4" y="11.8" width="1.2" height="1.2" fill="#ebe7f6"/><path d="M3.8 2.4 L1.4 3.2 V13.8 L3.8 14.6 M14.2 2.4 L16.6 3.2 V13.8 L14.2 14.6" fill="none" stroke="#ebe7f6" stroke-width="1.3" stroke-linejoin="round" stroke-linecap="round"/></svg>
<svg style="left:15.8px;top:150.5px" width="18" height="18" viewBox="0 0 18 18"><path d="M9.00 0.40 L5.62 2.35 L5.62 6.25 L9.00 8.20 L12.38 6.25 L12.38 2.35Z M9.00 4.30 L9.00 8.20 M9.00 4.30 L5.62 2.35 M9.00 4.30 L12.38 2.35" fill="none" stroke="#ebe7f6" stroke-width="1.3" stroke-linejoin="round" stroke-linecap="round"/><path d="M4.60 7.90 L1.22 9.85 L1.22 13.75 L4.60 15.70 L7.98 13.75 L7.98 9.85Z M4.60 11.80 L4.60 15.70 M4.60 11.80 L1.22 9.85 M4.60 11.80 L7.98 9.85" fill="none" stroke="#ebe7f6" stroke-width="1.3" stroke-linejoin="round" stroke-linecap="round"/><path d="M13.40 7.90 L10.02 9.85 L10.02 13.75 L13.40 15.70 L16.78 13.75 L16.78 9.85Z M13.40 11.80 L13.40 15.70 M13.40 11.80 L10.02 9.85 M13.40 11.80 L16.78 9.85" fill="none" stroke="#ebe7f6" stroke-width="1.3" stroke-linejoin="round" stroke-linecap="round"/></svg>
<svg style="left:15.8px;top:196.5px" width="18" height="18" viewBox="0 0 18 18"><path d="M2.8 2.6 L9.5 0.7 L14.8 3 L14.7 10.3 C13.5 13.5 11 15.5 8.7 16.5 C6 15.3 2.8 13 1.8 10.4 Z" fill="#ebe7f6"/><rect x="9.6" y="2.2" width="3.6" height="5.4" fill="#4f2ba3"/><rect x="4.8" y="8.4" width="5" height="2.4" fill="#4f2ba3"/><g transform="rotate(-15 9.2 8.4)"><path d="M0.7 8.4 A8.5 2.9 0 0 1 17.7 8.4" fill="none" stroke="#ebe7f6" stroke-width="1.2"/><path d="M0.7 8.4 A8.5 2.9 0 0 0 17.7 8.4" fill="none" stroke="#4f2ba3" stroke-width="2.2"/><path d="M0.7 8.4 A8.5 2.9 0 0 0 17.7 8.4" fill="none" stroke="#ebe7f6" stroke-width="1.2"/></g></svg>
<svg style="left:15.8px;top:242.5px" width="18" height="18" viewBox="0 0 18 18"><rect x="1.6" y="0.9" width="15.6" height="15.2" rx="1.3" fill="none" stroke="#ebe7f6" stroke-width="1.2"/><path d="M9.6 6.2 A3.1 3.1 0 1 0 7.8 11.8 L14.4 4.6" fill="none" stroke="#ebe7f6" stroke-width="2" stroke-linecap="round"/></svg>
<svg style="left:15.8px;top:288.5px" width="18" height="18" viewBox="0 0 18 18"><path d="M14.6 8.6 V1.8 A1.2 1.2 0 0 0 13.4 0.6 H2.4 A1.2 1.2 0 0 0 1.2 1.8 V14.2 A1.2 1.2 0 0 0 2.4 15.4 H7.6" fill="none" stroke="#ebe7f6" stroke-width="1.3" stroke-linejoin="round" stroke-linecap="round"/><path d="M3.4 4 H3.6 M5.2 4 H12.4 M3.4 6.8 H3.6 M5.2 6.8 H12.4 M3.4 9.6 H3.6 M5.2 9.6 H9.6" stroke="#ebe7f6" stroke-width="1.2" stroke-linecap="round"/><path d="M8.2 12.9 C10 10.4 15.4 10.4 17.3 12.9 C15.4 15.4 10 15.4 8.2 12.9Z" fill="none" stroke="#ebe7f6" stroke-width="1.3" stroke-linejoin="round" stroke-linecap="round"/><circle cx="12.75" cy="12.9" r="1.3" fill="#ebe7f6"/></svg>
<svg style="left:15.8px;top:334.5px" width="18" height="18" viewBox="0 0 18 18"><path d="M14.6 5.6 V1.8 A1.2 1.2 0 0 0 13.4 0.6 H2.4 A1.2 1.2 0 0 0 1.2 1.8 V15.2 A1.2 1.2 0 0 0 2.4 16.4 H9.4" fill="none" stroke="#ebe7f6" stroke-width="1.3" stroke-linejoin="round" stroke-linecap="round"/><path d="M3.4 3.8 H12 M3.4 6.6 H10 M3.4 9.4 H8.8 M3.4 12.2 H8.6" stroke="#ebe7f6" stroke-width="1.2" stroke-linecap="round"/><circle cx="13.6" cy="10.2" r="3.3" fill="none" stroke="#ebe7f6" stroke-width="1.3" stroke-linejoin="round" stroke-linecap="round"/><circle cx="13.6" cy="10.2" r="1.1" fill="#ebe7f6"/><path d="M11.8 13 V16.8 L13.6 15.4 L15.4 16.8 V13" fill="none" stroke="#ebe7f6" stroke-width="1.3" stroke-linejoin="round" stroke-linecap="round"/></svg>
<svg style="left:15.8px;top:380.5px" width="18" height="18" viewBox="0 0 18 18"><rect x="1.6" y="0.8" width="15.6" height="15.4" rx="1.3" fill="none" stroke="#ebe7f6" stroke-width="1.2"/><path d="M9.4 3 C11.6 3 14.2 4 14.2 6.4 V8.8 C14.2 11.6 11.6 13.6 9.4 14.6 C7.2 13.6 4.6 11.6 4.6 8.8 V6.4 C4.6 4 7.2 3 9.4 3Z" fill="#ebe7f6"/><path d="M7.4 8.4 L9.4 6.4 L11.4 8.4 L9.4 10.4Z" fill="none" stroke="#4f2ba3" stroke-width="0.7" opacity=".45"/></svg>
<svg style="left:15.8px;top:426.5px" width="18" height="18" viewBox="0 0 18 18"><path d="M2.8 2.6 L9.5 0.7 L14.8 3 L14.7 10.3 C13.5 13.5 11 15.5 8.7 16.5 C6 15.3 2.8 13 1.8 10.4 Z" fill="#ebe7f6"/><rect x="9.6" y="2.2" width="3.6" height="5.4" fill="#4f2ba3"/><rect x="4.8" y="8.4" width="5" height="2.4" fill="#4f2ba3"/><g transform="rotate(-15 9.2 8.4)"><path d="M0.7 8.4 A8.5 2.9 0 0 1 17.7 8.4" fill="none" stroke="#ebe7f6" stroke-width="1.2"/><path d="M0.7 8.4 A8.5 2.9 0 0 0 17.7 8.4" fill="none" stroke="#4f2ba3" stroke-width="2.2"/><path d="M0.7 8.4 A8.5 2.9 0 0 0 17.7 8.4" fill="none" stroke="#ebe7f6" stroke-width="1.2"/></g></svg>
<svg style="left:15.8px;top:472.5px" width="18" height="18" viewBox="0 0 18 18"><path d="M9.00 0.40 L5.62 2.35 L5.62 6.25 L9.00 8.20 L12.38 6.25 L12.38 2.35Z M9.00 4.30 L9.00 8.20 M9.00 4.30 L5.62 2.35 M9.00 4.30 L12.38 2.35" fill="none" stroke="#ebe7f6" stroke-width="1.3" stroke-linejoin="round" stroke-linecap="round"/><path d="M4.60 7.90 L1.22 9.85 L1.22 13.75 L4.60 15.70 L7.98 13.75 L7.98 9.85Z M4.60 11.80 L4.60 15.70 M4.60 11.80 L1.22 9.85 M4.60 11.80 L7.98 9.85" fill="none" stroke="#ebe7f6" stroke-width="1.3" stroke-linejoin="round" stroke-linecap="round"/><path d="M13.40 7.90 L10.02 9.85 L10.02 13.75 L13.40 15.70 L16.78 13.75 L16.78 9.85Z M13.40 11.80 L13.40 15.70 M13.40 11.80 L10.02 9.85 M13.40 11.80 L16.78 9.85" fill="none" stroke="#ebe7f6" stroke-width="1.3" stroke-linejoin="round" stroke-linecap="round"/></svg>
<svg style="left:15.8px;top:518.5px" width="18" height="18" viewBox="0 0 18 18"><rect x="1.6" y="1.2" width="15.6" height="15" rx="1.3" fill="none" stroke="#ebe7f6" stroke-width="1.2"/><path d="M5.2 10.9 H14.2 C15.6 10.9 16 9.8 15.8 8.9 C15.6 8 14.8 7.5 14 7.5 C13.8 5.5 12.2 4 10.2 4 C8.4 4 7.2 5.2 6.8 6.4 C5.9 6.2 5.3 6.8 5.2 7.4 C3.8 7.6 3.6 10.9 5.2 10.9Z" fill="none" stroke="#ebe7f6" stroke-width="1.3" stroke-linejoin="round" stroke-linecap="round"/><path d="M6.6 7.6 V9.6 H8.2" fill="none" stroke="#ebe7f6" stroke-width="1.3" stroke-linejoin="round" stroke-linecap="round"/></svg>
<svg style="left:15.8px;top:564.5px" width="18" height="18" viewBox="0 0 18 18"><rect x="1.6" y="1.2" width="15.6" height="15" rx="1.3" fill="none" stroke="#ebe7f6" stroke-width="1.2"/><path d="M5.6 5.6 H11.6 L15 8.6 L11.6 11.6 H4.8 C3.6 11.6 3.4 10.8 3.8 9.6 L4.6 6.6 C4.8 5.9 5 5.6 5.6 5.6Z" fill="none" stroke="#ebe7f6" stroke-width="1.3" stroke-linejoin="round" stroke-linecap="round"/><path d="M7 6.8 L6 10.4" stroke="#4f2ba3" stroke-width="1.3"/><path d="M9.5 7.6 C10.5 7.2 11.5 7.6 11.8 8.6 C11.5 9.6 10.5 10 9.5 9.6" fill="none" stroke="#ebe7f6" stroke-width="1.3" stroke-linejoin="round" stroke-linecap="round"/></svg>
<svg style="left:15.8px;top:610.5px" width="18" height="18" viewBox="0 0 18 18"><rect x="1.6" y="1.2" width="15.6" height="12.2" rx="1.3" fill="none" stroke="#ebe7f6" stroke-width="1.2"/><path d="M7.2 10.6 V8 A2.2 2.2 0 0 1 11.6 8 V10.6" fill="none" stroke="#ebe7f6" stroke-width="1.3"/><path d="M9.4 8.6 V10.4" stroke="#ebe7f6" stroke-width="0.9"/><path d="M4.6 10.9 H14" stroke="#ebe7f6" stroke-width="1.3" stroke-linecap="round"/><circle cx="9.4" cy="2.9" r="0.8" fill="#ebe7f6"/><path d="M5.6 4.4 L6.6 5.4 M13.2 4.4 L12.2 5.4 M4.6 8 H5.9 M12.9 8 H14.2" stroke="#ebe7f6" stroke-width="1.1" stroke-linecap="round"/><path d="M8.6 13.4 V15.6 M10.2 13.4 V15.6" stroke="#ebe7f6" stroke-width="1"/><path d="M1 16.2 H17.8" stroke="#ebe7f6" stroke-width="1.2" stroke-linecap="round"/></svg>
<svg style="left:15.8px;top:656.5px" width="18" height="18" viewBox="0 0 18 18"><path d="M9.00 0.40 L5.62 2.35 L5.62 6.25 L9.00 8.20 L12.38 6.25 L12.38 2.35Z M9.00 4.30 L9.00 8.20 M9.00 4.30 L5.62 2.35 M9.00 4.30 L12.38 2.35" fill="none" stroke="#ebe7f6" stroke-width="1.3" stroke-linejoin="round" stroke-linecap="round"/><path d="M4.60 7.90 L1.22 9.85 L1.22 13.75 L4.60 15.70 L7.98 13.75 L7.98 9.85Z M4.60 11.80 L4.60 15.70 M4.60 11.80 L1.22 9.85 M4.60 11.80 L7.98 9.85" fill="none" stroke="#ebe7f6" stroke-width="1.3" stroke-linejoin="round" stroke-linecap="round"/><path d="M13.40 7.90 L10.02 9.85 L10.02 13.75 L13.40 15.70 L16.78 13.75 L16.78 9.85Z M13.40 11.80 L13.40 15.70 M13.40 11.80 L10.02 9.85 M13.40 11.80 L16.78 9.85" fill="none" stroke="#ebe7f6" stroke-width="1.3" stroke-linejoin="round" stroke-linecap="round"/></svg>
<svg style="left:15.8px;top:702.5px" width="18" height="18" viewBox="0 0 18 18"><g transform="translate(-1.7,-1.3) scale(1.07)"><path d="M8.8 13.9 H6.2 C4 13.9 3.2 12.4 3.2 10.8 C3.2 9.1 4.3 8 6.2 7.8 C6.4 4.7 8.4 2.2 11.3 2.2 C13 2.2 14.5 3 15.6 4.2" fill="none" stroke="#ebe7f6" stroke-width="1.3" stroke-linejoin="round" stroke-linecap="round"/><path d="M13.2 13.6 V8.2" stroke="#ebe7f6" stroke-width="1.5"/><path d="M10.3 9.7 L13.2 6.4 L16.1 9.7 Z" fill="#ebe7f6"/><path d="M11 15.9 H15.6" stroke="#ebe7f6" stroke-width="1.2" stroke-linecap="round"/></g></svg>
<div class="r" style="left:52px;top:47px;width:198px;height:688px;background:#fff;"></div>
<div class="r" style="left:52px;top:47px;width:20px;height:688px;background:linear-gradient(90deg,rgba(120,100,210,.30),rgba(120,100,210,.08) 50%,rgba(120,100,210,0));"></div>
<div class="r" style="left:52px;top:47px;width:198px;height:8px;background:linear-gradient(180deg,rgba(0,0,0,.04),rgba(0,0,0,0));"></div>
<div class="t" style="left:68px;top:65px;font-size:16px;line-height:16px;height:16px;color:#111;font-weight:bold;">IAM</div>
<div class="r" style="left:52px;top:97px;width:198px;height:1px;background:#e6e6e6;"></div>
<div class="r" style="left:52px;top:274px;width:198px;height:44px;background:#f4f3f9;"></div>
<div class="t" style="left:68px;top:113px;">Identities</div>
<svg style="left:224px;top:117px" width="10" height="6" viewBox="0 0 10 6"><path d="M0 0 H10 L5 6Z" fill="#aaa"/></svg>
<div class="t" style="left:68px;top:157px;">Permissions</div>
<svg style="left:224px;top:161px" width="10" height="6" viewBox="0 0 10 6"><path d="M0 6 H10 L5 0Z" fill="#aaa"/></svg>
<div class="r" style="left:73px;top:206px;width:4px;height:4px;background:#888;border-radius:50%;"></div>
<div class="t" style="left:87px;top:201px;color:#333;">Assign Permissions</div>
<div class="r" style="left:73px;top:250px;width:4px;height:4px;background:#888;border-radius:50%;"></div>
<div class="t" style="left:87px;top:245px;color:#333;">Policies</div>
<div class="r" style="left:73px;top:294px;width:4px;height:4px;background:#888;border-radius:50%;"></div>
<div class="t" style="left:87px;top:289px;color:#5631ad;">Control Group MGMT</div>
<div class="t" style="left:68px;top:333px;">IdPs</div>
<div class="r" style="left:1910px;top:0px;width:2px;height:735px;background:#000;"></div>
</body></html>
